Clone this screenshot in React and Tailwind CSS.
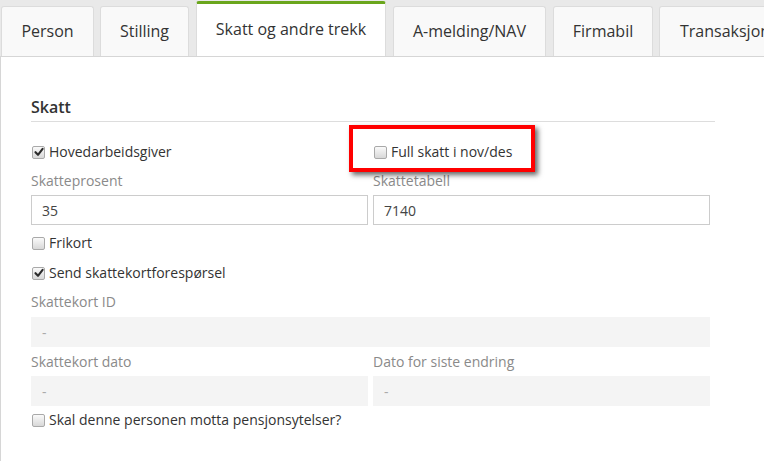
import React from "react";

function Box({ checked }) {
  return (
    <span className="inline-flex h-[13px] w-[13px] shrink-0 items-center justify-center rounded-[2px] border border-[#a9a9a9] bg-gradient-to-b from-[#fafafa] to-[#d8d8d8]">
      {checked && (
        <svg width="10" height="10" viewBox="0 0 10 10">
          <path d="M1.5 5.2 L4 7.8 L8.6 1.8" fill="none" stroke="#2b2b2b" strokeWidth="2.1" strokeLinecap="round" strokeLinejoin="round" />
        </svg>
      )}
    </span>
  );
}

function Check({ checked, label, className = "" }) {
  return (
    <div className={"flex h-[20px] items-center gap-[4px] pl-[1px] text-[14px] leading-[20px] text-[#333] " + className}>
      <Box checked={checked} />
      <span>{label}</span>
    </div>
  );
}

function Tab({ label, w, active, ml }) {
  if (active) {
    return (
      <div className={"relative z-10 flex h-[55px] shrink-0 items-center justify-center rounded-t-[3px] border-t-[3px] border-x border-t-[#6aa61c] border-x-[#dcdcdc] bg-white pb-[2px] text-[16px] text-[#333] " + w + " " + ml}>
        <span className="whitespace-nowrap">{label}</span>
      </div>
    );
  }
  return (
    <div className={"flex h-[50px] shrink-0 items-center justify-center rounded-t-[3px] border border-b-0 border-[#dcdcdc] bg-[#f9f9f9] pb-[1px] text-[16px] text-[#333] " + w + " " + ml}>
      <span className="whitespace-nowrap">{label}</span>
    </div>
  );
}

export default function App() {
  return (
    <div className="relative h-[461px] w-[764px] overflow-hidden bg-white" style={{ fontFamily: '"Open Sans", "Noto Sans", sans-serif' }}>
      <div className="flex h-[56px] items-end overflow-hidden bg-[#e9e9e9] pl-[1px]">
        <Tab label="Person" w="w-[93px]" ml="" />
        <Tab label="Stilling" w="w-[89px]" ml="ml-[6px]" />
        <Tab label="Skatt og andre trekk" w="w-[190px]" ml="ml-[7px]" active />
        <Tab label="A-melding/NAV" w="w-[153px]" ml="ml-[7px]" />
        <Tab label="Firmabil" w="w-[100px]" ml="ml-[7px]" />
        <div className="ml-[6px] flex h-[50px] w-[140px] shrink-0 items-center justify-start rounded-t-[3px] border border-b-0 border-[#dcdcdc] bg-[#f9f9f9] pb-[1px] pl-[20px] text-[16px] text-[#333]">
          <span className="whitespace-nowrap">Transaksjoner</span>
        </div>
      </div>
      <div className="h-[405px] border-l border-t border-[#d6d6d6] pl-[30px] pt-[39px]">
        <div className="h-[26px] w-[684px] border-b border-[#dddddd] text-[16px] font-semibold leading-[22px] text-[#333]">Skatt</div>
        <div className="grid w-[679px] grid-cols-2 gap-x-[5px]">
          <div>
            <Check checked label="Hovedarbeidsgiver" className="mt-[20px]" />
            <div className="mt-[9px] text-[14px] leading-[20px] text-[#8a8a8a]">Skatteprosent</div>
            <div className="mt-[4px] flex h-[30px] items-center border border-[#cccccc] pl-[10px] text-[14px] text-[#444]">35</div>
          </div>
          <div>
            <Check label="Full skatt i nov/des" className="mt-[20px]" />
            <div className="mt-[9px] text-[14px] leading-[20px] text-[#8a8a8a]">Skattetabell</div>
            <div className="mt-[4px] flex h-[30px] items-center border border-[#cccccc] pl-[10px] text-[14px] text-[#444]">7140</div>
          </div>
        </div>
        <Check label="Frikort" className="mt-[8px]" />
        <Check checked label="Send skattekortforespørsel" className="mt-[10px]" />
        <div className="mt-[9px] text-[14px] leading-[20px] text-[#8a8a8a]">Skattekort ID</div>
        <div className="mt-[5px] flex h-[30px] w-[679px] items-center bg-[#f4f4f4] pl-[11px] text-[14px] text-[#aaa]">-</div>
        <div className="grid w-[679px] grid-cols-2 gap-x-[5px]">
          <div>
            <div className="mt-[5px] text-[14px] leading-[20px] text-[#8a8a8a]">Skattekort dato</div>
            <div className="mt-[4px] flex h-[30px] items-center bg-[#f4f4f4] pl-[11px] text-[14px] text-[#aaa]">-</div>
          </div>
          <div>
            <div className="mt-[5px] text-[14px] leading-[20px] text-[#8a8a8a]">Dato for siste endring</div>
            <div className="mt-[4px] flex h-[30px] items-center bg-[#f4f4f4] pl-[11px] text-[14px] text-[#aaa]">-</div>
          </div>
        </div>
        <Check label="Skal denne personen motta pensjonsytelser?" className="mt-[4px]" />
      </div>
      <div className="pointer-events-none absolute left-[349px] top-[125px] h-[47px] w-[186px] border-[4px] border-[#ff0000] shadow-[3px_3px_5px_rgba(0,0,0,0.6)]" />
    </div>
  );
}
